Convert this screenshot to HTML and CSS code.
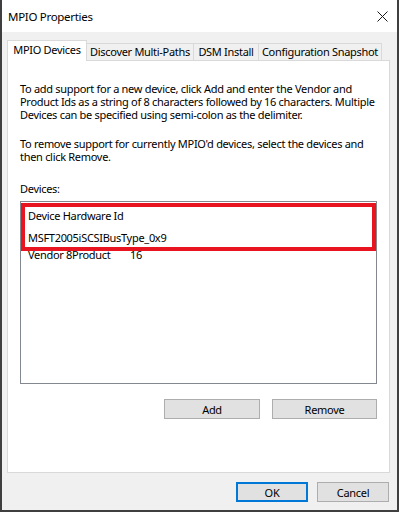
FILE: index.html
```html
<!DOCTYPE html>
<html lang="en">
<head>
    <meta charset="UTF-8">
    <title>MPIO Properties</title>
    <link rel="stylesheet" href="styles.css">
</head>
<body>
    <div class="window">
        <div class="titlebar">
            <span class="title">MPIO Properties</span>
            <svg class="close" width="11" height="11" viewBox="0 0 11 11">
                <path d="M0.5 0.5 L10.5 10.5 M10.5 0.5 L0.5 10.5" stroke="#1a1a1a" stroke-width="1" fill="none"/>
            </svg>
        </div>

        <div class="body">
            <div class="tabs">
                <div class="tab active">MPIO Devices</div>
                <div class="tab tab-discover">Discover Multi-Paths</div>
                <div class="tab tab-dsm">DSM Install</div>
                <div class="tab tab-snapshot">Configuration Snapshot</div>
            </div>

            <div class="panel">
                <p class="para">To add support for a new device, click Add and enter the Vendor and Product Ids as a string of 8 characters followed by 16 characters. Multiple Devices can be specified using semi-colon as the delimiter.</p>
                <p class="para para-remove">To remove support for currently MPIO'd devices, select the devices and then click Remove.</p>
                <div class="label">Devices:</div>

                <div class="listbox">
                    <div class="row header">Device Hardware Id</div>
                    <div class="row">MSFT2005iSCSIBusType_0x9</div>
                    <div class="row"><span class="col-vendor">Vendor 8Product</span><span>16</span></div>
                    <!-- annotation box drawn over the list -->
                    <div class="highlight"></div>
                </div>

                <div class="actions">
                    <button class="btn btn-add">Add</button>
                    <button class="btn btn-remove">Remove</button>
                </div>
            </div>

            <div class="footer">
                <button class="btn btn-ok">OK</button>
                <button class="btn btn-cancel">Cancel</button>
            </div>
        </div>
    </div>
</body>
</html>
```

FILE: styles.css
```css
body {
    margin: 0;
    background-color: #ffffff;
    font-family: "Noto Sans", "Open Sans", sans-serif;
    font-size: 11px;
    letter-spacing: -0.3px;
    color: #000000;
}

.window {
    box-sizing: border-box;
    width: 399px;
    height: 512px;
    border-left: 2px solid #3f3f3f;
    border-right: 2px solid #3f3f3f;
    border-bottom: 2px solid #3f3f3f;
    display: flex;
    flex-direction: column;
    background-color: #f0f0f0;
}

.titlebar {
    height: 32px;
    background-color: #ffffff;
    display: flex;
    align-items: center;
    justify-content: space-between;
    padding: 0 9px 0 6px;
    font-size: 11.5px;
}

.close {
    margin-top: 1px;
}

.body {
    flex: 1;
    display: flex;
    flex-direction: column;
    padding: 8px 7px 0 5px;
}

/* Tab strip */
.tabs {
    display: flex;
    align-items: flex-end;
    height: 20px;
    position: relative;
    z-index: 1;
}

.tab {
    box-sizing: border-box;
    height: 17px;
    line-height: 16px;
    border: 1px solid #d9d9d9;
    border-bottom: none;
    border-left: none;
    background-color: #f0f0f0;
    text-align: center;
    white-space: nowrap;
}

.tab.active {
    height: 21px;
    margin-bottom: -1px;
    line-height: 18px;
    width: 80px;
    border-left: 1px solid #d9d9d9;
    background-color: #ffffff;
}

.tab-discover {
    width: 107px;
}

.tab-dsm {
    width: 65px;
}

.tab-snapshot {
    width: 123px;
}

/* Tab page */
.panel {
    box-sizing: border-box;
    height: 413px;
    border: 1px solid #d9d9d9;
    background-color: #ffffff;
    padding: 21px 12px 0 12px;
    display: flex;
    flex-direction: column;
}

.para {
    margin: 0;
    line-height: 13px;
}

.para-remove {
    margin-top: 16px;
}

.label {
    margin-top: 19px;
    line-height: 13px;
}

.listbox {
    position: relative;
    box-sizing: border-box;
    margin-top: 6px;
    height: 183px;
    border: 1px solid #828790;
    padding: 5px 0 0 7px;
}

.row {
    height: 17px;
    line-height: 17px;
}

.row.header {
    height: 22px;
    line-height: 18px;
}

.row:last-of-type {
    margin-top: 1px;
}

.col-vendor {
    display: inline-block;
    width: 102px;
}

.highlight {
    position: absolute;
    top: 1px;
    left: 0;
    right: 0;
    height: 48px;
    box-sizing: border-box;
    border: 4px solid #e8141f;
}

.actions {
    display: flex;
    justify-content: flex-end;
    gap: 12px;
    margin-top: 15px;
}

.btn {
    box-sizing: border-box;
    height: 20px;
    padding: 0;
    border: 1px solid #adadad;
    background-color: #e1e1e1;
    font-family: inherit;
    font-size: 11px;
    letter-spacing: inherit;
    color: #000000;
}

.btn-add {
    width: 96px;
}

.btn-remove {
    width: 105px;
}

.footer {
    display: flex;
    justify-content: flex-end;
    gap: 9px;
    margin-top: 9px;
    padding-right: 1px;
}

.btn-ok,
.btn-cancel {
    width: 72px;
}

.btn-ok {
    border: 2px solid #0078d7;
}
```
